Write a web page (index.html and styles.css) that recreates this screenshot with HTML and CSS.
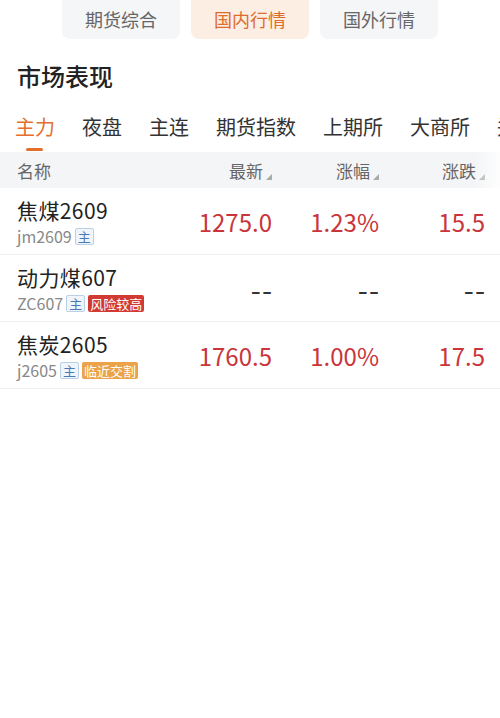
FILE: index.html
```html
<!DOCTYPE html>
<html lang="zh-CN">
<head>
    <meta charset="UTF-8">
    <meta name="viewport" content="width=device-width, initial-scale=1.0">
    <title>国内行情</title>
    <link rel="stylesheet" href="styles.css">
</head>
<body>
    <div class="pills">
        <div class="pill">期货综合</div>
        <div class="pill active">国内行情</div>
        <div class="pill">国外行情</div>
    </div>

    <h2 class="title">市场表现</h2>

    <div class="tabs">
        <div class="tab active">主力</div>
        <div class="tab">夜盘</div>
        <div class="tab">主连</div>
        <div class="tab">期货指数</div>
        <div class="tab">上期所</div>
        <div class="tab">大商所</div>
        <div class="tab">郑商所</div>
    </div>

    <div class="table">
        <div class="row head">
            <div class="cell name">名称</div>
            <div class="cell num">最新<span class="sort"></span></div>
            <div class="cell num">涨幅<span class="sort"></span></div>
            <div class="cell num">涨跌<span class="sort"></span></div>
        </div>

        <div class="row">
            <div class="cell name">
                <div class="title-line">焦煤2609</div>
                <div class="code-line">jm2609<span class="tag main">主</span></div>
            </div>
            <div class="cell num up">1275.0</div>
            <div class="cell num up">1.23%</div>
            <div class="cell num up">15.5</div>
        </div>

        <div class="row">
            <div class="cell name">
                <div class="title-line">动力煤607</div>
                <div class="code-line">ZC607<span class="tag main">主</span><span class="tag risk">风险较高</span></div>
            </div>
            <div class="cell num none">--</div>
            <div class="cell num none">--</div>
            <div class="cell num none">--</div>
        </div>

        <div class="row">
            <div class="cell name">
                <div class="title-line">焦炭2605</div>
                <div class="code-line">j2605<span class="tag main">主</span><span class="tag near">临近交割</span></div>
            </div>
            <div class="cell num up">1760.5</div>
            <div class="cell num up">1.00%</div>
            <div class="cell num up">17.5</div>
        </div>
    </div>
</body>
</html>
```

FILE: styles.css
```css
body {
    margin: 0;
    width: 500px;
    background: #fff;
    color: #222;
    font-family: "Noto Sans CJK SC", "Noto Sans", sans-serif;
}

.pills {
    display: flex;
    justify-content: center;
    gap: 11px;
    margin-top: -10px;
}

.pill {
    width: 118px;
    height: 39px;
    padding-top: 10px;
    line-height: 39px;
    text-align: center;
    font-size: 18px;
    color: #666;
    background: #f5f6f8;
    border-radius: 8px;
}

.pill.active {
    color: #dd6c2d;
    background: #fdeee3;
}

.title {
    margin: 22px 0 0 17px;
    font-size: 24px;
    font-weight: 500;
    line-height: 30px;
    color: #222;
}

.tabs {
    display: flex;
    gap: 27px;
    padding-left: 15px;
    margin-top: 22px;
    overflow: hidden;
    white-space: nowrap;
}

.tab {
    position: relative;
    flex: none;
    font-size: 20px;
    line-height: 28px;
    padding-bottom: 11px;
    color: #333;
}

.tab.active {
    color: #e36f2c;
}

.tab.active::after {
    content: "";
    position: absolute;
    left: 11px;
    bottom: 1px;
    width: 17px;
    height: 3px;
    border-radius: 2px;
    background: #e36f2c;
}

.row {
    display: grid;
    grid-template-columns: 1fr 107px 107px 106px;
    padding: 0 15px 0 17px;
    align-items: center;
    border-bottom: 1px solid #f0f0f0;
}

.row.head {
    position: relative;
    height: 36px;
    background: #f4f5f7;
    border-bottom: none;
    font-size: 17px;
    color: #666;
}

.row.head::after {
    content: "";
    position: absolute;
    top: 0;
    right: 0;
    width: 26px;
    height: 100%;
    background: linear-gradient(to right, rgba(255, 255, 255, 0), rgba(255, 255, 255, 0.85));
}

.num {
    text-align: right;
}

.sort {
    display: inline-block;
    width: 0;
    height: 0;
    margin-left: 3px;
    border-left: 6px solid transparent;
    border-bottom: 6px solid #aaa;
    vertical-align: -2px;
}

.row .name {
    padding: 7px 0;
}

.row.head .name {
    padding: 0;
}

.title-line {
    font-size: 21px;
    letter-spacing: 0.4px;
    line-height: 30px;
    color: #222;
}

.code-line {
    display: flex;
    align-items: center;
    height: 22px;
    font-size: 16px;
    line-height: 22px;
    color: #888;
}

.tag {
    margin-left: 3px;
    height: 17px;
    line-height: 17px;
    padding: 0 2px;
    font-size: 13px;
    border-radius: 2px;
}

.tag.main {
    height: 15px;
    line-height: 15px;
    color: #4b7bb5;
    background: #f0f5fb;
    border: 1px solid #bcd0e4;
}

.tag.risk {
    color: #fff;
    background: #d23b34;
}

.tag.near {
    color: #fff;
    background: #eba248;
}

.up {
    font-size: 24px;
    color: #c9353a;
}

.none {
    font-size: 29px;
    line-height: 30px;
    letter-spacing: 1px;
    margin-right: -1px;
    color: #333;
}
```
